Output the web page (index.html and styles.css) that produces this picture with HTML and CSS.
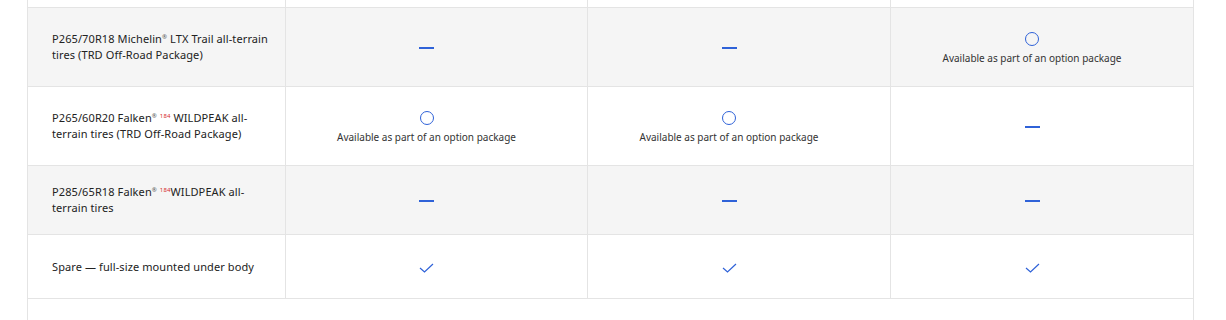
FILE: index.html
```html
<!DOCTYPE html>
<html>
<head>
<meta charset="utf-8">
<link rel="stylesheet" href="styles.css">
</head>
<body>
<div class="table">
  <div class="row row-top">
    <div class="cell"></div><div class="cell"></div><div class="cell"></div><div class="cell last"></div>
  </div>
  <div class="row gray r1">
    <div class="cell label"><span class="txt">P265/70R18 Michelin<sup class="reg">®</sup> LTX Trail all-terrain tires (TRD Off-Road Package)</span></div>
    <div class="cell val"><span class="dash"></span></div>
    <div class="cell val"><span class="dash"></span></div>
    <div class="cell val last"><span class="circle"></span><span class="note">Available as part of an option package</span></div>
  </div>
  <div class="row r2">
    <div class="cell label"><span class="txt">P265/60R20 Falken<sup class="reg">®</sup> <sup class="fn">184</sup> WILDPEAK all-terrain tires (TRD Off-Road Package)</span></div>
    <div class="cell val"><span class="circle"></span><span class="note">Available as part of an option package</span></div>
    <div class="cell val"><span class="circle"></span><span class="note">Available as part of an option package</span></div>
    <div class="cell val last"><span class="dash"></span></div>
  </div>
  <div class="row gray r3">
    <div class="cell label"><span class="txt">P285/65R18 Falken<sup class="reg">®</sup> <sup class="fn">184</sup>WILDPEAK all-terrain tires</span></div>
    <div class="cell val"><span class="dash"></span></div>
    <div class="cell val"><span class="dash"></span></div>
    <div class="cell val last"><span class="dash"></span></div>
  </div>
  <div class="row r4">
    <div class="cell label"><span class="txt">Spare — full-size mounted under body</span></div>
    <div class="cell val"><svg class="check" viewBox="0 0 15 10" width="15" height="10"><path d="M1 5 L5.5 9 L14 1" fill="none" stroke="#2f62d8" stroke-width="1.2"/></svg></div>
    <div class="cell val"><svg class="check" viewBox="0 0 15 10" width="15" height="10"><path d="M1 5 L5.5 9 L14 1" fill="none" stroke="#2f62d8" stroke-width="1.2"/></svg></div>
    <div class="cell val last"><svg class="check" viewBox="0 0 15 10" width="15" height="10"><path d="M1 5 L5.5 9 L14 1" fill="none" stroke="#2f62d8" stroke-width="1.2"/></svg></div>
  </div>
</div>
</body>
</html>
```
FILE: styles.css
```css
html, body {
  margin: 0;
  padding: 0;
  background: #fff;
}
body {
  font-family: "Noto Sans", "Open Sans", sans-serif;
  color: #222;
  height: 320px;
  overflow: hidden;
}
.table {
  margin-left: 27px;
  width: 1167px;
  box-sizing: border-box;
  border-left: 1px solid #e4e4e4;
  border-right: 1px solid #e4e4e4;
  min-height: 320px;
}
.row {
  display: grid;
  grid-template-columns: 258px 302px 303px 302px;
  border-bottom: 1px solid #e4e4e4;
  box-sizing: border-box;
}
.row.gray {
  background: #f5f5f5;
}
.row-top { height: 8px; }
.r1 { height: 79px; }
.r2 { height: 79px; }
.r3 { height: 69px; }
.r4 { height: 64px; }
.cell {
  border-right: 1px solid #e4e4e4;
  box-sizing: border-box;
}
.cell.last {
  border-right: none;
}
.label {
  display: flex;
  align-items: center;
  padding: 0 16px 0 24px;
  font-size: 11px;
  line-height: 16px;
  letter-spacing: 0.1px;
}
.txt {
  display: block;
}
.reg, .fn {
  font-size: 6px;
  line-height: 1;
  vertical-align: baseline;
  position: relative;
  top: -4px;
}
.reg {
  color: #555;
}
.fn {
  color: #d62b2b;
}
.val {
  display: flex;
  flex-direction: column;
  align-items: center;
  justify-content: center;
  padding: 2px 20px 0 0;
}
.dash {
  display: block;
  width: 15px;
  height: 2px;
  background: #2f62d8;
}
.circle {
  display: block;
  width: 12px;
  height: 12px;
  border: 1.3px solid #2f62d8;
  border-radius: 50%;
}
.note {
  display: block;
  margin-top: 6px;
  font-size: 10px;
  line-height: 12px;
  color: #333;
}
.check {
  display: block;
}
```
